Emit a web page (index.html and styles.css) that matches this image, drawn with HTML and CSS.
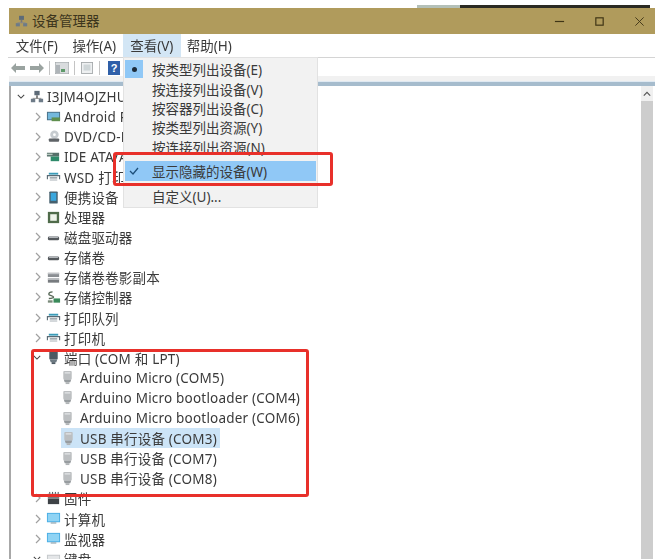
FILE: index.html
```html
<!DOCTYPE html>
<html lang="zh">
<head>
<meta charset="utf-8">
<title>设备管理器</title>
<link rel="stylesheet" href="styles.css">
</head>
<body>
<svg class="defs" width="0" height="0">
  <symbol id="net" viewBox="0 0 16 16"><rect x="5" y="1" width="6" height="5" fill="#5d6b78"/><rect x="7" y="6" width="2" height="4" fill="#777"/><rect x="1" y="10" width="5" height="4" fill="#6d7b88"/><rect x="10" y="10" width="5" height="4" fill="#6d7b88"/><rect x="3" y="9" width="10" height="1" fill="#888"/></symbol>
  <symbol id="monitor" viewBox="0 0 16 16"><rect x="1" y="2" width="14" height="10" fill="#4aaee4"/><rect x="2" y="3" width="12" height="8" fill="#8fd3f4"/><rect x="5" y="12" width="6" height="1.500" fill="#9fb0ba"/></symbol>
  <symbol id="android" viewBox="0 0 16 16"><rect x="1" y="3" width="14" height="9" fill="#4a6f86"/><rect x="2" y="4" width="12" height="7" fill="#74b8dc"/><rect x="6" y="9" width="9" height="4" fill="#5f8f4e"/></symbol>
  <symbol id="dvd" viewBox="0 0 16 16"><circle cx="9" cy="6" r="4.500" fill="#c6cbcf"/><circle cx="9" cy="6" r="1.500" fill="#fff"/><rect x="3" y="10" width="11" height="3.500" rx="1" fill="#5f6367"/></symbol>
  <symbol id="ide" viewBox="0 0 16 16"><rect x="1" y="4" width="13" height="4" fill="#56706a"/><rect x="1" y="5" width="6" height="1.500" fill="#b8c8c0"/><rect x="5" y="8" width="9" height="5" fill="#2e8a6a"/></symbol>
  <symbol id="printer" viewBox="0 0 16 16"><rect x="3" y="4" width="10" height="2" fill="#3a9bb8"/><path d="M1.500 11V7h13v4" fill="none" stroke="#5a6a74" stroke-width="1.200"/><rect x="4" y="9" width="8" height="1" fill="#5a6a74"/><rect x="4" y="11" width="8" height="1.500" fill="#c2c8cc"/></symbol>
  <symbol id="portable" viewBox="0 0 16 16"><rect x="3.500" y="1.500" width="9" height="13" rx="1" fill="#46606e"/><rect x="5" y="3" width="6" height="8.500" fill="#3aa7de"/></symbol>
  <symbol id="cpu" viewBox="0 0 16 16"><rect x="2" y="2" width="12" height="12" fill="#4f6b4a"/><rect x="4.500" y="4.500" width="7" height="7" fill="#eef3ea"/></symbol>
  <symbol id="disk" viewBox="0 0 16 16"><rect x="2" y="7" width="12" height="4" rx="1.500" fill="#54585c"/><rect x="3" y="7" width="10" height="1.500" rx=".7" fill="#b2b6ba"/></symbol>
  <symbol id="shadow" viewBox="0 0 16 16"><rect x="2" y="3" width="12" height="4.500" fill="#8a8e92"/><rect x="2" y="9" width="12" height="4.500" fill="#777b7f"/><rect x="2" y="3" width="12" height="1.500" fill="#c2c5c8"/><rect x="2" y="9" width="12" height="1.500" fill="#c2c5c8"/></symbol>
  <symbol id="storage" viewBox="0 0 16 16"><path d="M7 2C4 2 3 3 3 4.500S8 6 8 7.500 6 9 3 9" fill="none" stroke="#5a6a5a" stroke-width="1.500"/><rect x="8" y="9" width="7" height="4.500" fill="#3a8a5a"/><rect x="2" y="11" width="5" height="2.500" fill="#7a8a7a"/></symbol>
  <symbol id="port" viewBox="0 0 16 16"><rect x="3.500" y="1" width="9" height="9" rx="1" fill="#4d5a63"/><path d="M4 10h8l-1 3H5z" fill="#6d7a83"/><rect x="6" y="13" width="4" height="2" fill="#4d5a63"/></symbol>
  <symbol id="usb" viewBox="0 0 16 16"><rect x="3.500" y="1" width="9" height="9" rx="1" fill="#bcbfc1"/><path d="M4 10h8l-1 3H5z" fill="#979c9f"/><rect x="6" y="13" width="4" height="2" fill="#b0b4b6"/><rect x="5" y="2.500" width="6" height="1.200" fill="#e8eaeb"/></symbol>
  <symbol id="firmware" viewBox="0 0 16 16"><rect x="2" y="3" width="12" height="11" fill="#3e4246"/><path d="M4 1v2M7 1v2M10 1v2M13 1v2" stroke="#3e4246" stroke-width="1"/><rect x="2" y="7" width="12" height="1" fill="#c9c9c9"/></symbol>
  <symbol id="keyboard" viewBox="0 0 16 16"><rect x="1" y="4" width="14" height="9" fill="#c4c8cb"/><rect x="2" y="5" width="12" height="7" fill="#e4e6e8"/></symbol>
  <symbol id="chev-r" viewBox="0 0 6 10"><path d="M1 1l4 4-4 4" fill="none" stroke="#a0a0a0" stroke-width="1.200"/></symbol>
  <symbol id="chev-d" viewBox="0 0 10 8"><path d="M1 2l4 4 4-4" fill="none" stroke="#444" stroke-width="1.300"/></symbol>
</svg>

<div class="strip"><span class="strip-pale"></span><span class="strip-dark"></span></div>

<div class="window">
  <header class="titlebar">
    <svg class="title-icon"><use href="#net"/></svg>
    <span class="title-text">设备管理器</span>
    <div class="controls">
      <svg class="ctl" viewBox="0 0 12 12"><path d="M1 6h10" stroke="#3f3516" stroke-width="1.300"/></svg>
      <svg class="ctl" viewBox="0 0 12 12"><rect x="2" y="2" width="8" height="8" fill="none" stroke="#3f3516" stroke-width="1.300"/></svg>
      <svg class="ctl" viewBox="0 0 12 12"><path d="M1.500 1.500l9 9M10.500 1.500l-9 9" stroke="#3f3516" stroke-width="1"/></svg>
    </div>
  </header>

  <nav class="menubar">
    <span class="menu-item">文件(F)</span>
    <span class="menu-item">操作(A)</span>
    <span class="menu-item active">查看(V)</span>
    <span class="menu-item">帮助(H)</span>
  </nav>

  <div class="toolbar">
    <svg class="tool arrow" viewBox="0 0 14 10"><path d="M0 5l5-5v3h9v4H5v3z" fill="#9aa3a0"/></svg>
    <svg class="tool arrow second" viewBox="0 0 14 10"><path d="M14 5L9 0v3H0v4h9v3z" fill="#9aa3a0"/></svg>
    <i class="tool-sep"></i>
    <svg class="tool" viewBox="0 0 14 12"><rect x="0" y="0" width="14" height="12" fill="#d9dcde" stroke="#9a9fa2"/><rect x="1" y="3" width="4" height="8" fill="#aeb4b8"/><rect x="6" y="7" width="4" height="3" fill="#5e9a6a"/></svg>
    <i class="tool-sep"></i>
    <svg class="tool" viewBox="0 0 14 14"><rect x=".5" y=".5" width="13" height="13" fill="#eef0f1" stroke="#a4a8aa"/><rect x="3" y="3" width="8" height="7" fill="#cfd6d8"/></svg>
    <i class="tool-sep"></i>
    <span class="tool-help">?</span>
  </div>

  <div class="band"></div>

  <div class="content">
    <div class="tree">
      <div class="row root"><svg class="chev down"><use href="#chev-d"/></svg><svg class="ico"><use href="#net"/></svg><span>I3JM4OJZHUK</span></div>
      <div class="row l1"><svg class="chev"><use href="#chev-r"/></svg><svg class="ico"><use href="#android"/></svg><span>Android Phone</span></div>
      <div class="row l1"><svg class="chev"><use href="#chev-r"/></svg><svg class="ico"><use href="#dvd"/></svg><span>DVD/CD-ROM</span></div>
      <div class="row l1"><svg class="chev"><use href="#chev-r"/></svg><svg class="ico"><use href="#ide"/></svg><span>IDE ATA/ATAPI</span></div>
      <div class="row l1"><svg class="chev"><use href="#chev-r"/></svg><svg class="ico"><use href="#printer"/></svg><span>WSD 打印提供程序</span></div>
      <div class="row l1"><svg class="chev"><use href="#chev-r"/></svg><svg class="ico"><use href="#portable"/></svg><span>便携设备</span></div>
      <div class="row l1"><svg class="chev"><use href="#chev-r"/></svg><svg class="ico"><use href="#cpu"/></svg><span>处理器</span></div>
      <div class="row l1"><svg class="chev"><use href="#chev-r"/></svg><svg class="ico"><use href="#disk"/></svg><span>磁盘驱动器</span></div>
      <div class="row l1"><svg class="chev"><use href="#chev-r"/></svg><svg class="ico"><use href="#disk"/></svg><span>存储卷</span></div>
      <div class="row l1"><svg class="chev"><use href="#chev-r"/></svg><svg class="ico"><use href="#shadow"/></svg><span>存储卷卷影副本</span></div>
      <div class="row l1"><svg class="chev"><use href="#chev-r"/></svg><svg class="ico"><use href="#storage"/></svg><span>存储控制器</span></div>
      <div class="row l1"><svg class="chev"><use href="#chev-r"/></svg><svg class="ico"><use href="#printer"/></svg><span>打印队列</span></div>
      <div class="row l1"><svg class="chev"><use href="#chev-r"/></svg><svg class="ico"><use href="#printer"/></svg><span>打印机</span></div>
      <div class="row l1"><svg class="chev down"><use href="#chev-d"/></svg><svg class="ico"><use href="#port"/></svg><span>端口 (COM 和 LPT)</span></div>
      <div class="row l2"><svg class="ico"><use href="#usb"/></svg><span>Arduino Micro (COM5)</span></div>
      <div class="row l2"><svg class="ico"><use href="#usb"/></svg><span>Arduino Micro bootloader (COM4)</span></div>
      <div class="row l2"><svg class="ico"><use href="#usb"/></svg><span>Arduino Micro bootloader (COM6)</span></div>
      <div class="row l2"><div class="sel"><svg class="ico"><use href="#usb"/></svg><span>USB 串行设备 (COM3)</span></div></div>
      <div class="row l2"><svg class="ico"><use href="#usb"/></svg><span>USB 串行设备 (COM7)</span></div>
      <div class="row l2"><svg class="ico"><use href="#usb"/></svg><span>USB 串行设备 (COM8)</span></div>
      <div class="row l1"><svg class="chev"><use href="#chev-r"/></svg><svg class="ico"><use href="#firmware"/></svg><span>固件</span></div>
      <div class="row l1"><svg class="chev"><use href="#chev-r"/></svg><svg class="ico"><use href="#monitor"/></svg><span>计算机</span></div>
      <div class="row l1"><svg class="chev"><use href="#chev-r"/></svg><svg class="ico"><use href="#monitor"/></svg><span>监视器</span></div>
      <div class="row l1"><svg class="chev down"><use href="#chev-d"/></svg><svg class="ico"><use href="#keyboard"/></svg><span>键盘</span></div>
    </div>
    <div class="scrollbar">
      <svg class="scroll-up" viewBox="0 0 10 6"><path d="M1 5l4-4 4 4" fill="none" stroke="#555" stroke-width="1.500"/></svg>
      <div class="thumb"></div>
    </div>
  </div>

  <div class="dropdown">
    <div class="dd-item"><span class="dd-mark on"><i class="dot"></i></span>按类型列出设备(E)</div>
    <div class="dd-item"><span class="dd-mark"></span>按连接列出设备(V)</div>
    <div class="dd-item"><span class="dd-mark"></span>按容器列出设备(C)</div>
    <div class="dd-item"><span class="dd-mark"></span>按类型列出资源(Y)</div>
    <div class="dd-item"><span class="dd-mark"></span>按连接列出资源(N)</div>
    <div class="dd-item hi"><span class="dd-mark on"><svg class="check" viewBox="0 0 10 8"><path d="M1 4l3 3 5-6" fill="none" stroke="#1d4f7a" stroke-width="1.300"/></svg></span>显示隐藏的设备(W)</div>
    <div class="dd-item last"><span class="dd-mark"></span>自定义(U)...</div>
  </div>
</div>

<div class="mark mark-menu"></div>
<div class="mark mark-ports"></div>
</body>
</html>
```

FILE: styles.css
```css
html, body { margin: 0; padding: 0; }
body {
  width: 660px;
  height: 559px;
  overflow: hidden;
  position: relative;
  background: #fff;
  font-family: "Noto Sans", "Noto Sans CJK SC", sans-serif;
  font-size: 13.5px;
  color: #3a3a3a;
}
.defs { position: absolute; }

.strip { height: 8px; display: flex; align-items: flex-end; padding-left: 417px; }
.strip-pale { width: 43px; height: 3px; background: #b4c0b8; }
.strip-dark { width: 190px; height: 3px; background: #2b2a22; }

.window {
  position: relative;
  margin-left: 9px;
  width: 646px;
  height: 551px;
  display: flex;
  flex-direction: column;
  filter: blur(0.35px);
}

.titlebar {
  height: 26px;
  background: #b09b5c;
  display: flex;
  align-items: center;
  padding-left: 6px;
  flex: none;
}
.title-icon { width: 13px; height: 13px; }
.title-text { margin-left: 4px; margin-top: -2px; color: #3c351c; }
.controls { margin-left: auto; display: flex; }
.ctl { width: 11px; height: 11px; margin-right: 29px; }
.ctl:last-child { margin-right: 10px; }

.menubar {
  height: 23px;
  display: flex;
  align-items: stretch;
  margin-left: -1px;
  border-bottom: 1px solid #d4d4d4;
  flex: none;
}
.menu-item {
  width: 57.5px;
  display: flex;
  align-items: center;
  justify-content: center;
  padding-bottom: 2px;
  box-sizing: border-box;
  white-space: nowrap;
}
.menu-item.active { background: #d3e6f5; }

.toolbar {
  height: 18px;
  display: flex;
  align-items: center;
  padding: 2px 0 0 2px;
  box-sizing: border-box;
  flex: none;
}
.tool { width: 14px; height: 12px; }
.tool.arrow { margin-right: 5px; height: 10px; }
.tool.arrow.second { margin-right: 0; }
.tool-sep { width: 1px; height: 14px; background: #c4c4c4; margin: 0 5px; }
.tool-help {
  width: 12px;
  height: 14px;
  margin-left: 3px;
  background: #2f5fa8;
  color: #fff;
  font: bold 11px/14px "Liberation Sans", sans-serif;
  text-align: center;
}

.band {
  height: 10px;
  background: linear-gradient(#f1f1f1 0 5px, #dfe9f2 5px 6px, #a6bccd 6px 10px);
  flex: none;
}

.content {
  flex: 1;
  min-height: 0;
  display: flex;
  border-left: 2px solid #a8a8a8;
  overflow: hidden;
}
.tree { flex: 1; min-width: 0; padding-top: 0.5px; letter-spacing: 0.2px; }
.row {
  height: 20.1px;
  display: flex;
  align-items: center;
  white-space: nowrap;
  box-sizing: border-box;
}
.row.root { padding-left: 6px; }
.row.l1 { padding-left: 24px; }
.row.l2 { padding-left: 49px; }
.row.root span, .row.l1 span { margin-left: 3px; }
.row.l2 span { margin-left: 5px; }
.chev { width: 6px; height: 10px; margin-right: 5px; flex: none; }
.chev.down { width: 8px; height: 7px; margin-right: 5px; }
.row.l1 .chev.down { margin-left: -2px; }
.ico { width: 15px; height: 15px; flex: none; }
.row.root .ico { width: 14px; height: 14px; }
.sel {
  height: 100%;
  display: flex;
  align-items: center;
  background: #cce4f7;
  margin-left: 1px;
  width: 159px;
}
.row.l2 .sel span { margin-left: 4px; }

.scrollbar {
  width: 12px;
  margin-right: 2px;
  flex: none;
  display: flex;
  flex-direction: column;
  background: #f0f0f0;
}
.scroll-up { width: 8px; height: 6px; margin: 5px auto 4px; }
.thumb { flex: 1; background: #cdcdcd; }

.dropdown {
  position: absolute;
  left: 114px;
  top: 49px;
  width: 195px;
  height: 151px;
  box-sizing: border-box;
  background: #f2f2f2;
  border: 1px solid #e2e2e2;
  padding: 2px 1px 0;
}
.dd-item {
  height: 19.4px;
  display: flex;
  align-items: center;
  white-space: nowrap;
  padding-bottom: 1px;
  box-sizing: border-box;
}
.dd-mark {
  width: 18px;
  height: 100%;
  margin-right: 9px;
  display: flex;
  align-items: center;
  justify-content: center;
  flex: none;
}
.dd-mark.on { background: #90c8f6; }
.dot { width: 5px; height: 5px; border-radius: 50%; background: #1d2c3a; }
.check { width: 10px; height: 8px; }
.dd-item.hi { height: 20px; margin-top: 4px; padding-bottom: 0; background: #90c8f6; }
.dd-item.last { margin-top: 6px; }

.mark {
  position: absolute;
  box-sizing: border-box;
  border: 3px solid #e8302a;
  border-radius: 3px;
}
.mark-menu { left: 113px; top: 152px; width: 220px; height: 34px; }
.mark-ports { left: 31px; top: 349px; width: 278px; height: 148px; }
```
